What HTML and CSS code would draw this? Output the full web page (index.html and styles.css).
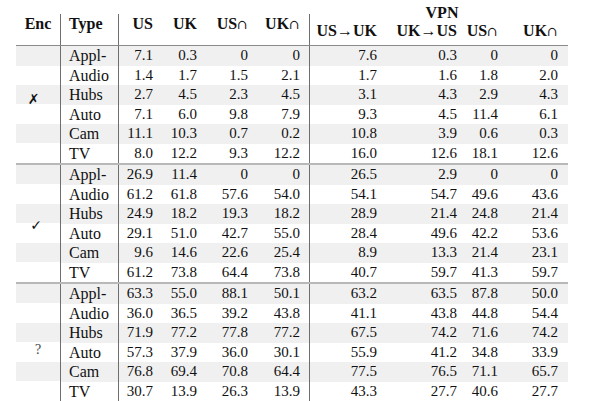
FILE: index.html
```html
<!DOCTYPE html>
<html>
<head>
<meta charset="utf-8">
<link rel="stylesheet" href="styles.css">
</head>
<body>
<div class="tbl">
  <div class="head">
    <span class="hl enc">Enc</span>
    <span class="hl type">Type</span>
    <span class="hl num">US</span>
    <span class="hl num">UK</span>
    <span class="hl num">US<span class="cap">∩</span></span>
    <span class="hl num last-left">UK<span class="cap">∩</span></span>
    <span class="vpn">VPN</span>
    <span class="hs num">US→UK</span>
    <span class="hs num">UK→US</span>
    <span class="hs num">US<span class="cap">∩</span></span>
    <span class="hs num end">UK<span class="cap">∩</span></span>
  </div>

  <div class="group">
    <div class="enc-cell"><span class="sym x">✗</span></div>
    <div class="rows">
      <div class="row"><span>Appl-</span><span>7.1</span><span>0.3</span><span>0</span><span>0</span><span>7.6</span><span>0.3</span><span>0</span><span>0</span></div>
      <div class="row"><span>Audio</span><span>1.4</span><span>1.7</span><span>1.5</span><span>2.1</span><span>1.7</span><span>1.6</span><span>1.8</span><span>2.0</span></div>
      <div class="row"><span>Hubs</span><span>2.7</span><span>4.5</span><span>2.3</span><span>4.5</span><span>3.1</span><span>4.3</span><span>2.9</span><span>4.3</span></div>
      <div class="row"><span>Auto</span><span>7.1</span><span>6.0</span><span>9.8</span><span>7.9</span><span>9.3</span><span>4.5</span><span>11.4</span><span>6.1</span></div>
      <div class="row"><span>Cam</span><span>11.1</span><span>10.3</span><span>0.7</span><span>0.2</span><span>10.8</span><span>3.9</span><span>0.6</span><span>0.3</span></div>
      <div class="row"><span>TV</span><span>8.0</span><span>12.2</span><span>9.3</span><span>12.2</span><span>16.0</span><span>12.6</span><span>18.1</span><span>12.6</span></div>
    </div>
  </div>

  <div class="group">
    <div class="enc-cell"><span class="sym ok">✓</span></div>
    <div class="rows">
      <div class="row"><span>Appl-</span><span>26.9</span><span>11.4</span><span>0</span><span>0</span><span>26.5</span><span>2.9</span><span>0</span><span>0</span></div>
      <div class="row"><span>Audio</span><span>61.2</span><span>61.8</span><span>57.6</span><span>54.0</span><span>54.1</span><span>54.7</span><span>49.6</span><span>43.6</span></div>
      <div class="row"><span>Hubs</span><span>24.9</span><span>18.2</span><span>19.3</span><span>18.2</span><span>28.9</span><span>21.4</span><span>24.8</span><span>21.4</span></div>
      <div class="row"><span>Auto</span><span>29.1</span><span>51.0</span><span>42.7</span><span>55.0</span><span>28.4</span><span>49.6</span><span>42.2</span><span>53.6</span></div>
      <div class="row"><span>Cam</span><span>9.6</span><span>14.6</span><span>22.6</span><span>25.4</span><span>8.9</span><span>13.3</span><span>21.4</span><span>23.1</span></div>
      <div class="row"><span>TV</span><span>61.2</span><span>73.8</span><span>64.4</span><span>73.8</span><span>40.7</span><span>59.7</span><span>41.3</span><span>59.7</span></div>
    </div>
  </div>

  <div class="group">
    <div class="enc-cell"><span class="sym q">?</span></div>
    <div class="rows">
      <div class="row"><span>Appl-</span><span>63.3</span><span>55.0</span><span>88.1</span><span>50.1</span><span>63.2</span><span>63.5</span><span>87.8</span><span>50.0</span></div>
      <div class="row"><span>Audio</span><span>36.0</span><span>36.5</span><span>39.2</span><span>43.8</span><span>41.1</span><span>43.8</span><span>44.8</span><span>54.4</span></div>
      <div class="row"><span>Hubs</span><span>71.9</span><span>77.2</span><span>77.8</span><span>77.2</span><span>67.5</span><span>74.2</span><span>71.6</span><span>74.2</span></div>
      <div class="row"><span>Auto</span><span>57.3</span><span>37.9</span><span>36.0</span><span>30.1</span><span>55.9</span><span>41.2</span><span>34.8</span><span>33.9</span></div>
      <div class="row"><span>Cam</span><span>76.8</span><span>69.4</span><span>70.8</span><span>64.4</span><span>77.5</span><span>76.5</span><span>71.1</span><span>65.7</span></div>
      <div class="row"><span>TV</span><span>30.7</span><span>13.9</span><span>26.3</span><span>13.9</span><span>43.3</span><span>27.7</span><span>40.6</span><span>27.7</span></div>
    </div>
  </div>
</div>
</body>
</html>
```

FILE: styles.css
```css
* { box-sizing: border-box; }

body {
  margin: 0;
  background: #fff;
  color: #111;
  font-family: "Liberation Serif", "DejaVu Serif", serif;
  font-size: 15px;
}

.tbl {
  margin: 4px 0 0 16px;
  width: 552px;
}

/* header */
.head {
  display: grid;
  grid-template-columns: 45px 58px 40px 44px 51px 56px 73px 80px 41px 64px;
  grid-template-rows: 10px 8px 23px;
  border-bottom: 1px solid #8a8a8a;
  font-weight: bold;
  font-size: 16px;
  line-height: 18px;
}

.hl {
  grid-row: 2 / 4;
  padding-top: 1px;
}

.hl.enc {
  text-align: center;
  border-right: 1px solid #6e6e6e;
}

.hl.type {
  padding-left: 8px;
  border-right: 1px solid #6e6e6e;
}

.num {
  text-align: right;
  padding-right: 6px;
}

.hl.last-left {
  padding-right: 9px;
  border-right: 1px solid #6e6e6e;
}

.vpn {
  grid-column: 7 / 11;
  grid-row: 1 / 3;
  text-align: center;
  padding-left: 6px;
}

.hs {
  grid-row: 3;
}

.hs.end {
  padding-right: 10px;
}

.cap {
  font-weight: normal;
  font-family: "DejaVu Serif", serif;
  font-size: 13px;
}

/* body groups */
.group {
  display: flex;
}

.group + .group {
  border-top: 2px solid #b8b8b8;
}

.enc-cell {
  width: 45px;
  flex: none;
  border-right: 1px solid #6e6e6e;
  display: flex;
  align-items: center;
  justify-content: center;
  background: repeating-linear-gradient(to bottom, #f0f0f0 0 19.5px, #fff 19.5px 39px);
}

.sym {
  font-family: "DejaVu Sans", sans-serif;
  font-size: 14px;
}

.sym.x {
  margin: 0 9px 12px 0;
  font-weight: bold;
}

.sym.ok {
  margin: 2px 4px 0 0;
}

.sym.q {
  font-family: "Liberation Serif", serif;
  font-size: 14px;
  color: #444;
  margin-top: 14px;
}

.rows {
  flex: 1;
}

.row {
  display: grid;
  grid-template-columns: 58px 40px 44px 51px 56px 73px 80px 41px 64px;
  height: 19.5px;
  line-height: 19.5px;
}

.row:nth-child(odd) {
  background: #f0f0f0;
}

.row > span {
  text-align: right;
  padding-right: 6px;
}

.row > span:first-child {
  text-align: left;
  padding-left: 8px;
  font-size: 16px;
  border-right: 1px solid #6e6e6e;
}

.row > span:nth-child(5) {
  padding-right: 9px;
  border-right: 1px solid #6e6e6e;
}

.row > span:last-child {
  padding-right: 10px;
}
```
